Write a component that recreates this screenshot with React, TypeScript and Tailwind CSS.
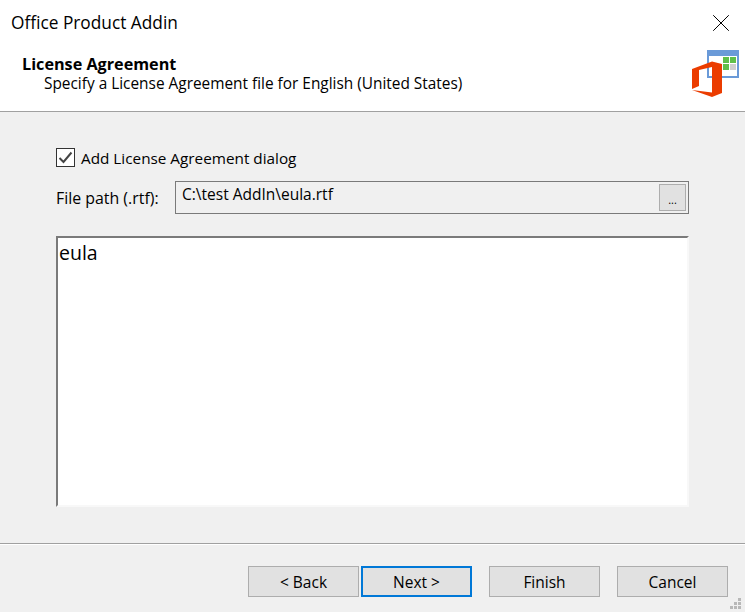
import { X } from "lucide-react";

const uiFont = { fontFamily: '"Open Sans", "Noto Sans", sans-serif' };

function AddinLogo() {
  return (
    <svg width="48" height="48" viewBox="0 0 48 48" className="absolute right-[6px] top-[50px]">
      <rect x="16" y="0" width="32" height="28" fill="#6a9ad8" />
      <rect x="18" y="6" width="28" height="20" fill="#ffffff" />
      <rect x="32" y="7" width="6" height="6" fill="#5fbf4a" />
      <rect x="39" y="7" width="6" height="6" fill="#5fbf4a" />
      <rect x="32" y="14" width="6" height="6" fill="#5fbf4a" />
      <rect x="39" y="14" width="6" height="6" fill="#cfcfcf" />
      <path
        d="M1 19 L21 11.5 L31 14 L31 43 L21 47 L1 40 L21 42.5 L21 17 L8 20 L8 36 L1 39 Z"
        fill="#eb3c00"
      />
    </svg>
  );
}

function WizardButton({ label, active }: { label: string; active?: boolean }) {
  return (
    <button
      className={`h-[31px] w-[111px] bg-[#e1e1e1] pt-[2px] text-[15.5px] text-black ${
        active ? "border-2 border-[#0078d7]" : "border border-[#adadad]"
      }`}
    >
      {label}
    </button>
  );
}

export default function App() {
  return (
    <div
      className="relative flex h-[612px] w-[745px] flex-col overflow-hidden bg-[#f0f0f0] text-black"
      style={uiFont}
    >
      {/* Header */}
      <div className="relative h-[112px] border-b border-[#a0a0a0] bg-white">
        <div className="flex h-[46px] items-center justify-between pl-[11px] pr-[9px]">
          <span className="text-[17.3px]">Office Product Addin</span>
          <X className="h-[30px] w-[30px] text-black" strokeWidth={0.8} />
        </div>
        <div className="pl-[22px] pt-[9px] text-[16.2px] leading-[19px] font-bold">License Agreement</div>
        <div className="pl-[44px] text-[15.4px] leading-[19px]">
          Specify a License Agreement file for English (United States)
        </div>
        <AddinLogo />
      </div>

      {/* Body */}
      <div className="flex flex-1 flex-col pl-[56px] pr-[56px] pt-[36px]">
        <label className="flex h-[19px] items-center gap-[6px] text-[15.3px]">
          <span className="flex h-[19px] w-[19px] items-center justify-center border border-[#333333] bg-white">
            <svg width="15" height="13" viewBox="0 0 15 13" fill="none">
              <path d="M1.5 7 L5.5 11 L13.5 1.5" stroke="#444444" strokeWidth="2" />
            </svg>
          </span>
          <span className="pt-[2px]">Add License Agreement dialog</span>
        </label>

        <div className="mt-[14px] flex h-[33px] items-center gap-[15px]">
          <span className="w-[104px] pt-[2px] text-[15.9px] whitespace-nowrap">File path (.rtf):</span>
          <div className="flex h-[33px] flex-1 items-start justify-between border border-[#7a7a7a] pl-[6px] pr-[2px]">
            <span className="text-[15.5px] leading-[24px]">C:\test AddIn\eula.rtf</span>
            <span className="mt-[2px] flex h-[27px] w-[27px] items-center justify-center border border-[#adadad] bg-[#e1e1e1] pt-[6px] text-[11px]">
              ...
            </span>
          </div>
        </div>

        <div className="mt-[22px] h-[271px] w-[633px] border-t-2 border-r-2 border-b-2 border-l-2 border-t-[#7a7a7a] border-r-[#f8f8f8] border-b-[#f8f8f8] border-l-[#7a7a7a] bg-white pl-[1px] text-[19.5px] leading-[30px]">
          eula
        </div>
      </div>

      {/* Footer */}
      <div className="h-[69px] border-t border-[#a0a0a0] shadow-[inset_0_1px_0_#ffffff]">
        <div className="flex pl-[248px] pt-[22px]">
          <WizardButton label="< Back" />
          <div className="ml-[2px]">
            <WizardButton label="Next >" active />
          </div>
          <div className="ml-[17px]">
            <WizardButton label="Finish" />
          </div>
          <div className="ml-[17px]">
            <WizardButton label="Cancel" />
          </div>
        </div>
      </div>

      {/* Resize grip */}
      <svg width="12" height="12" viewBox="0 0 12 12" className="absolute bottom-[2px] right-[3px]" fill="#b8b8b8">
        <rect x="8" y="0" width="3" height="3" />
        <rect x="4" y="4" width="3" height="3" />
        <rect x="8" y="4" width="3" height="3" />
        <rect x="0" y="8" width="3" height="3" />
        <rect x="4" y="8" width="3" height="3" />
        <rect x="8" y="8" width="3" height="3" />
      </svg>
    </div>
  );
}
